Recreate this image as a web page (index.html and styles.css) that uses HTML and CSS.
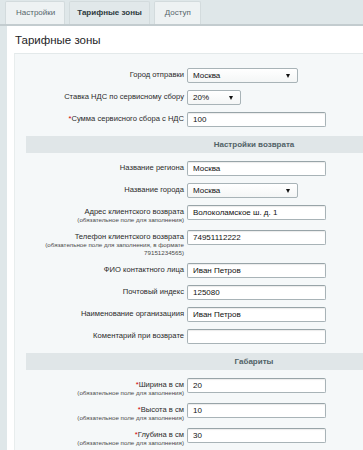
FILE: index.html
```html
<!DOCTYPE html>
<html lang="ru">
<head>
<meta charset="utf-8">
<title>Тарифные зоны</title>
<link rel="stylesheet" href="styles.css">
</head>
<body>
<div class="tabs">
  <div class="tab">Настройки</div>
  <div class="tab active">Тарифные зоны</div>
  <div class="tab">Доступ</div>
</div>
<div class="panel">
  <h1 class="title">Тарифные зоны</h1>
  <div class="box">
    <div class="form">
      <div class="lbl">Город отправки</div>
      <div class="fld"><div class="select w111"><span>Москва</span></div></div>

      <div class="lbl">Ставка НДС по сервисному сбору</div>
      <div class="fld"><div class="select w54"><span>20%</span></div></div>

      <div class="lbl"><span class="req">*</span>Сумма сервисного сбора с НДС</div>
      <div class="fld"><input class="inp" type="text" value="100"></div>

      <div class="head">Настройки возврата</div>

      <div class="lbl">Название региона</div>
      <div class="fld"><input class="inp" type="text" value="Москва"></div>

      <div class="lbl">Название города</div>
      <div class="fld"><div class="select w111"><span>Москва</span></div></div>

      <div class="lbl">Адрес клиентского возврата<br><span class="sub">(обязательное поле для заполнения)</span></div>
      <div class="fld"><input class="inp" type="text" value="Волоколамское ш. д. 1"></div>

      <div class="lbl">Телефон клиентского возврата<br><span class="sub">(обязательное поле для заполнения, в формате<br>79151234565)</span></div>
      <div class="fld"><input class="inp" type="text" value="74951112222"></div>

      <div class="lbl">ФИО контактного лица</div>
      <div class="fld"><input class="inp" type="text" value="Иван Петров"></div>

      <div class="lbl">Почтовый индекс</div>
      <div class="fld"><input class="inp" type="text" value="125080"></div>

      <div class="lbl">Наименование организациия</div>
      <div class="fld"><input class="inp" type="text" value="Иван Петров"></div>

      <div class="lbl">Коментарий при возврате</div>
      <div class="fld"><input class="inp" type="text" value=""></div>

      <div class="head">Габариты</div>

      <div class="lbl"><span class="req">*</span>Ширина в см<br><span class="sub">(обязательное поле для заполнения)</span></div>
      <div class="fld"><input class="inp" type="text" value="20"></div>

      <div class="lbl"><span class="req">*</span>Высота в см<br><span class="sub">(обязательное поле для заполнения)</span></div>
      <div class="fld"><input class="inp" type="text" value="10"></div>

      <div class="lbl"><span class="req">*</span>Глубина в см<br><span class="sub">(обязательное поле для заполнения)</span></div>
      <div class="fld"><input class="inp" type="text" value="30"></div>
    </div>
  </div>
</div>
</body>
</html>
```
FILE: styles.css
```css
html, body {
  margin: 0;
  padding: 0;
  overflow: hidden;
}
body {
  background: #dfe7e9;
  font-family: "Liberation Sans", Arial, sans-serif;
  color: #000;
  width: 363px;
  height: 450px;
}
.tabs {
  display: flex;
  gap: 4px;
  padding: 1px 0 0 5px;
  border-bottom: 2px solid #c3cccf;
  box-sizing: border-box;
  height: 26px;
}
.tab {
  font-size: 8px;
  color: #56666b;
  background: #eef2f3;
  border: 1px solid #d3dbdd;
  border-bottom: none;
  border-radius: 2px 2px 0 0;
  padding: 0 9px 0 10px;
  line-height: 21px;
  height: 23px;
  box-sizing: border-box;
}
.tab.active {
  background: #e1e8ea;
  color: #2f3b3f;
  font-weight: bold;
  padding: 0 7px;
}
.panel {
  margin-left: 7px;
  background: #fff;
  width: 520px;
  height: 430px;
  padding: 0 0 0 7px;
  box-sizing: border-box;
}
.title {
  margin: 0;
  font-weight: normal;
  font-size: 11.5px;
  line-height: 14px;
  padding: 7px 0 6px 1px;
  color: #1d2426;
}
.box {
  background: #f5f8f9;
  border-top: 1px solid #e3e9ea;
  border-left: 1px solid #e8eded;
  padding: 10px 0 0 11px;
  height: 400px;
}
.form {
  display: grid;
  grid-template-columns: 158px 1fr;
  column-gap: 3px;
  width: 456px;
}
.lbl {
  text-align: right;
  font-size: 7.6px;
  line-height: 8px;
  color: #2a2a2a;
  padding: 7px 0 2px;
}
.sub {
  font-size: 6.2px;
  color: #4a4a4a;
}
.req {
  color: #d20000;
}
.fld {
  padding: 3.5px 0;
  display: flex;
  align-items: flex-start;
}
.inp {
  display: block;
  width: 139px;
  height: 15px;
  box-sizing: border-box;
  border: 1px solid #a8b3b7;
  border-top-color: #98a4a8;
  border-radius: 2px;
  box-shadow: inset 0 1px 1px rgba(0,0,0,0.08);
  background: #fff;
  font-family: "Liberation Sans", Arial, sans-serif;
  font-size: 8px;
  color: #111;
  padding: 0 5px;
  margin: 0;
  outline: none;
}
.select {
  position: relative;
  height: 15px;
  box-sizing: border-box;
  border: 1px solid #a8b3b7;
  border-radius: 2px;
  background: linear-gradient(#ffffff, #f4f6f6);
  font-size: 8px;
  line-height: 13px;
  padding: 0 5px;
  color: #111;
}
.select::after {
  content: "";
  position: absolute;
  right: 7px;
  top: 5px;
  border-left: 2px solid transparent;
  border-right: 2px solid transparent;
  border-top: 4px solid #111;
}
.w111 { width: 111px; }
.w54 { width: 54px; }
.head {
  grid-column: 1 / -1;
  background: #e0e6e8;
  height: 17px;
  line-height: 17px;
  text-align: center;
  font-size: 8px;
  font-weight: bold;
  color: #516267;
  margin: 6px 0 4px;
}
```
